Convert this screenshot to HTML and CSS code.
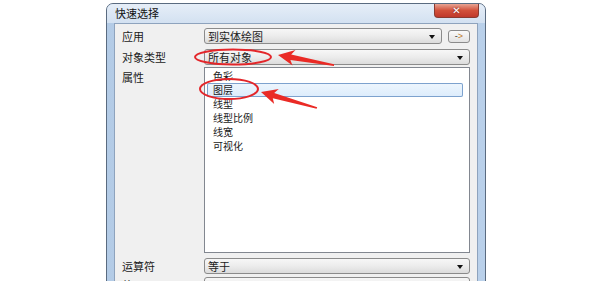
FILE: index.html
```html
<!DOCTYPE html>
<html lang="zh-CN">
<head>
  <meta charset="UTF-8">
  <title>快速选择</title>
  <link rel="stylesheet" href="styles.css">
</head>
<body>

  <div class="window">
    <div class="titlebar">
      <span class="title">快速选择</span>
      <span class="close">✕</span>
    </div>

    <div class="client">
      <div class="row">
        <span class="label">应用</span>
        <div class="field">
          <div class="combo grow">到实体绘图<i class="caret"></i></div>
          <div class="pick">-<b>&gt;</b></div>
        </div>
      </div>

      <div class="row">
        <span class="label">对象类型</span>
        <div class="field">
          <div class="combo grow">所有对象<i class="caret"></i></div>
        </div>
      </div>

      <div class="row top">
        <span class="label">属性</span>
        <ul class="list">
          <li>色彩</li>
          <li class="selected">图层</li>
          <li>线型</li>
          <li>线型比例</li>
          <li>线宽</li>
          <li>可视化</li>
        </ul>
      </div>

      <div class="row op">
        <span class="label">运算符</span>
        <div class="field">
          <div class="combo grow">等于<i class="caret"></i></div>
        </div>
      </div>

      <div class="row val">
        <span class="label">值</span>
        <div class="field">
          <div class="combo grow"><i class="caret"></i></div>
        </div>
      </div>
    </div>
  </div>

  <!-- red marks drawn over the dialog -->
  <svg class="marks" width="612" height="281" viewBox="0 0 612 281">
    <ellipse cx="233" cy="57" rx="38" ry="7.5" />
    <ellipse cx="229" cy="89" rx="29" ry="10" />
    <polygon points="278,55 295.5,50 291.2,54.6 334,64.2 334,66 290.4,60 292.5,65.5" />
    <polygon points="261,92 278.8,89 274.2,93 317.2,107.2 316.6,108.8 272.8,98.2 274.2,104" />
  </svg>

</body>
</html>
```

FILE: styles.css
```css
body {
  margin: 0;
  height: 281px;
  overflow: hidden;
  background: #fff;
  font-family: "Noto Sans CJK SC", "Noto Sans", sans-serif;
  font-size: 11px;
  color: #1a1a1a;
}

.window {
  width: 380px;
  height: 320px;
  margin: 3px 0 0 106px;
  border: 1px solid #5a6b80;
  border-radius: 7px 7px 0 0;
  background: linear-gradient(90deg, #b3cbe6 0%, #c9dbef 50%, #b9d0ea 100%);
  padding: 0 7px 0 7px;
  box-sizing: border-box;
}

.titlebar {
  height: 19px;
  display: flex;
  justify-content: space-between;
  align-items: flex-start;
  background: linear-gradient(180deg, #e6eef8, #d3e1f1);
  margin: 0 -7px;
  padding: 0 6px 0 8px;
  border-radius: 6px 6px 0 0;
}

.title {
  line-height: 19px;
  color: #111;
}

.close {
  width: 45px;
  height: 14px;
  line-height: 14px;
  text-align: center;
  color: #fff;
  font-family: "DejaVu Sans", sans-serif;
  font-size: 10px;
  font-weight: bold;
  background: linear-gradient(180deg, #e8a493 0%, #d2503a 50%, #c0392b 100%);
  border: 1px solid #8a3a30;
  border-top: none;
  border-radius: 0 0 4px 4px;
  box-sizing: border-box;
  text-shadow: 0 0 2px #6b1a10;
}

.client {
  height: 300px;
  background: #f0f0f0;
  border: 1px solid #8ea3bd;
  padding: 4px 7px 0 7px;
  box-sizing: border-box;
}

.row {
  display: flex;
  align-items: center;
  margin-bottom: 5px;
}

.row.top {
  align-items: flex-start;
  margin-top: -3px;
}

.row.op {
  margin-top: 5px;
  margin-bottom: 3px;
}

.label {
  width: 82px;
  flex: none;
  line-height: 16px;
}

.row.top .label {
  padding-top: 2px;
}

.field {
  flex: 1;
  display: flex;
  align-items: center;
  gap: 6px;
}

.combo {
  position: relative;
  height: 16px;
  line-height: 14px;
  padding-left: 3px;
  border: 1px solid #8b8b8b;
  border-radius: 3px;
  background: linear-gradient(180deg, #f7f7f7 0%, #ececec 50%, #dcdcdc 100%);
  box-sizing: border-box;
}

.grow {
  flex: 1;
}

.caret {
  position: absolute;
  right: 6px;
  top: 6px;
  width: 0;
  height: 0;
  border-left: 3.5px solid transparent;
  border-right: 3.5px solid transparent;
  border-top: 4px solid #111;
}

.pick {
  width: 22px;
  height: 13px;
  line-height: 11px;
  text-align: center;
  font-family: "Liberation Sans", sans-serif;
  font-size: 9px;
  color: #333;
  border: 1px solid #8b8b8b;
  border-radius: 3px;
  background: linear-gradient(180deg, #fafafa, #e2e2e2);
  box-sizing: border-box;
}

.pick b {
  color: #c07a2c;
  font-weight: normal;
}

.list {
  flex: 1;
  height: 186px;
  margin: 0;
  padding: 1px 6px 0 2px;
  list-style: none;
  background: #fff;
  border: 1px solid #828790;
  box-sizing: border-box;
}

.list li {
  height: 14px;
  line-height: 14px;
  padding-left: 6px;
  font-size: 10px;
}

.list li.selected {
  background: linear-gradient(180deg, #eef6fd, #dcecfc);
  box-shadow: inset 0 0 0 1px #7da2ce;
  border-radius: 2px;
}

.marks {
  position: absolute;
  top: 0;
  left: 0;
  pointer-events: none;
}

.marks ellipse {
  fill: none;
  stroke: #e3262a;
  stroke-width: 2;
}

.marks polygon {
  fill: #ea2a25;
}
```
